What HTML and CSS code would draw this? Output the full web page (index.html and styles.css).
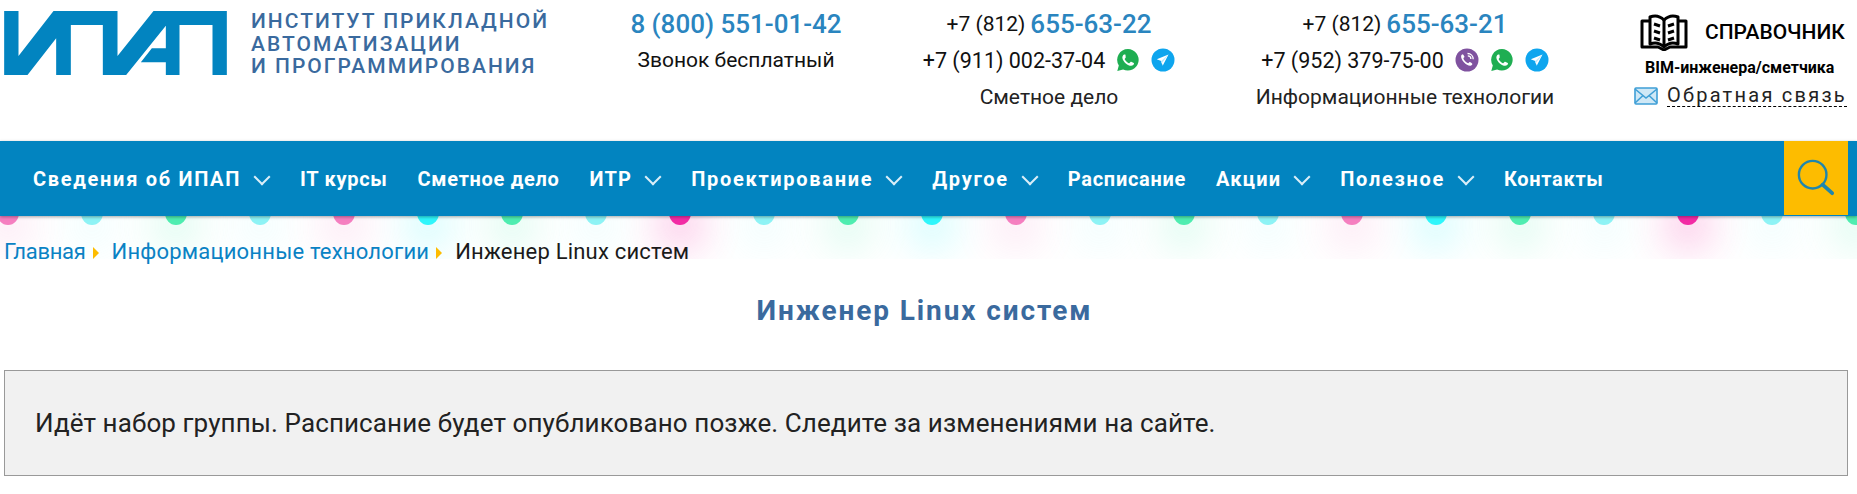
FILE: index.html

```html
<!DOCTYPE html>
<html lang="ru">
<head>
    <meta charset="UTF-8">
    <meta name="viewport" content="width=device-width, initial-scale=1.0">
    <title>Инженер Linux систем - ИПАП</title>
    <link rel="stylesheet" href="styles.css">
</head>
<body>

    <header class="top">
        <a class="brand" href="#">
            <svg class="brand-logo" viewBox="12 18 668 192">
                <polygon points="12,18 55,18 55,153 160,18 352,18 352,153 460,18 680,18 680,210 637,210 637,60 538,60 538,210 497,210 497,172 422,172 455,130 497,130 497,62 378,210 308,210 308,60 212,60 212,210 168,210 168,100 82,210 12,210"/>
            </svg>
            <span class="brand-name">Институт прикладной<br>автоматизации<br>и программирования</span>
        </a>

        <div class="contact">
            <div class="line"><a class="phone-big" href="#">8 (800) 551-01-42</a></div>
            <div class="line">Звонок бесплатный</div>
        </div>

        <div class="contact">
            <div class="line"><span>+7 (812)</span> <a class="phone-mid" href="#">655-63-22</a></div>
            <div class="line">
                <span class="phone-plain">+7 (911) 002-37-04</span>
                <svg class="msg" viewBox="0 0 24 24"><use href="#i-whatsapp"/></svg>
                <svg class="msg" viewBox="0 0 24 24"><use href="#i-telegram"/></svg>
            </div>
            <div class="line line-dept">Сметное дело</div>
        </div>

        <div class="contact">
            <div class="line"><span>+7 (812)</span> <a class="phone-mid" href="#">655-63-21</a></div>
            <div class="line">
                <span class="phone-plain">+7 (952) 379-75-00</span>
                <svg class="msg" viewBox="0 0 24 24"><use href="#i-viber"/></svg>
                <svg class="msg" viewBox="0 0 24 24"><use href="#i-whatsapp"/></svg>
                <svg class="msg" viewBox="0 0 24 24"><use href="#i-telegram"/></svg>
            </div>
            <div class="line line-dept">Информационные технологии</div>
        </div>

        <div class="side">
            <a class="guide" href="#">
                <svg class="guide-icon" viewBox="0 0 48 38">
                    <path d="M10 4 C15 2 20 3 24 7 C28 3 33 2 38 4 V31 C33 29 28 30 24 34 C20 30 15 29 10 31 Z"/>
                    <path d="M24 7 V34"/>
                    <path d="M10 8 H2 V34 H18 L24 37 L30 34 H46 V8 H38"/>
                    <path d="M14 11 L20 13 M14 18 L20 20 M14 25 L20 27 M34 11 L28 13 M34 18 L28 20 M34 25 L28 27"/>
                </svg>
                <span class="guide-title">СПРАВОЧНИК</span>
            </a>
            <div class="guide-sub">BIM-инженера/сметчика</div>
            <a class="feedback" href="#">
                <svg class="feedback-icon" viewBox="0 0 24 18">
                    <rect x="1" y="1" width="22" height="16" rx="1"/>
                    <path d="M1 2 L12 11 L23 2 M1 16 L9 8.5 M23 16 L15 8.5"/>
                </svg>
                <span class="feedback-text">Обратная связь</span>
            </a>
        </div>
    </header>

    <svg class="sprites" width="0" height="0">
        <symbol id="i-whatsapp" viewBox="0 0 24 24">
            <path fill="#1fae52" d="M12 1a10.8 10.8 0 0 0-9.2 16.4L1.3 23l5.8-1.5A10.8 10.8 0 1 0 12 1z"/>
            <path fill="#fff" d="M8.6 6.4c-.3 0-.8.1-1.2.6-.5.6-1.2 1.5-1 3 .3 2 1.6 3.8 3.4 5.4 1.8 1.500 3.600 2.300 5.400 2.300 1.300 0 2.300-.8 2.700-1.700.2-.5.1-.9-.1-1l-2.600-1.300c-.3-.1-.5-.1-.7.200l-1 1.200c-.2.2-.4.2-.7.1-1.800-.8-3.200-2.100-4.100-3.900-.1-.3 0-.5.1-.6l.8-1c.2-.3.2-.5.1-.7L9.500 6.800c-.2-.3-.5-.4-.9-.4z"/>
        </symbol>
        <symbol id="i-telegram" viewBox="0 0 24 24">
            <circle fill="#0ea5ee" cx="12" cy="12" r="11.500"/>
            <path fill="#fff" d="M17.500 6.500 5.800 11.300l4.400 1.600 1.500 4.800z"/>
            <path fill="#bfe6fb" d="M17.500 6.500 10.200 12.900l.2 2.900z"/>
        </symbol>
        <symbol id="i-viber" viewBox="0 0 24 24">
            <circle fill="#7f529f" cx="12" cy="12" r="11.500"/>
            <path fill="none" stroke="#fff" stroke-width="1.300" d="M12.500 5.500c3.300 0 5.700 2.400 5.700 5.700M12.800 7.800c1.800 0 3.100 1.300 3.100 3.100"/>
            <path fill="#fff" d="M7.800 6.200c-.6 0-1.600.9-1.700 1.900-.2 1.800 1 4.300 2.800 6.200 2 2.100 4.500 3.600 6.500 3.500 1.100 0 2-1 2-1.700 0-.4-2.100-2-2.600-2-.5-.1-1.100 1.100-1.500 1.100-.9 0-2.200-1-3.100-1.900-.9-1-1.800-2.300-1.800-3 0-.5 1.100-1 1.100-1.500 0-.5-1.600-2.600-1.700-2.600z"/>
        </symbol>
    </svg>

    <div class="nav-wrap">
        <nav class="nav">
            <a class="nav-item nav-wide has-sub" href="#">Сведения об ИПАП</a>
            <a class="nav-item nav-tight" href="#">IT курсы</a>
            <a class="nav-item nav-tight" href="#">Сметное дело</a>
            <a class="nav-item has-sub" href="#">ИТР</a>
            <a class="nav-item nav-wide has-sub" href="#">Проектирование</a>
            <a class="nav-item nav-wide has-sub" href="#">Другое</a>
            <a class="nav-item nav-tight" href="#">Расписание</a>
            <a class="nav-item has-sub" href="#">Акции</a>
            <a class="nav-item nav-wide has-sub" href="#">Полезное</a>
            <a class="nav-item nav-tight" href="#">Контакты</a>
            <button class="search" type="button">
                <svg viewBox="0 0 40 40">
                    <circle cx="16.500" cy="16.500" r="14.500"/>
                    <path class="search-handle" d="M27 27 L37 36"/>
                </svg>
            </button>
        </nav>
        <div class="garland">
            <i class="bulb pink"></i><i class="bulb pale"></i><i class="bulb green"></i><i class="bulb pale"></i>
            <i class="bulb pink"></i><i class="bulb cyan"></i><i class="bulb green"></i><i class="bulb pale"></i>
            <i class="bulb hot"></i><i class="bulb pale"></i><i class="bulb green"></i><i class="bulb cyan"></i>
            <i class="bulb pink"></i><i class="bulb pale"></i><i class="bulb green"></i><i class="bulb pale"></i>
            <i class="bulb pink"></i><i class="bulb cyan"></i><i class="bulb green"></i><i class="bulb pale"></i>
            <i class="bulb hot"></i><i class="bulb pale"></i><i class="bulb green"></i>
        </div>
    </div>

    <div class="crumbs">
        <a class="crumb-home" href="#">Главная</a>
        <span class="crumb-sep"></span>
        <a href="#">Информационные технологии</a>
        <span class="crumb-sep"></span>
        <span>Инженер Linux систем</span>
    </div>

    <h1 class="title">Инженер Linux систем</h1>

    <div class="notice">Идёт набор группы. Расписание будет опубликовано позже. Следите за изменениями на сайте.</div>

</body>
</html>
```

FILE: styles.css

```css
* {
    box-sizing: border-box;
}
body {
    margin: 0;
    background: #fff;
    color: #1a1a1a;
    font-family: Roboto, "Noto Sans", sans-serif;
    overflow: hidden;
}
a {
    color: inherit;
    text-decoration: none;
}
.sprites {
    display: block;
    height: 0;
}

/* header */
.top {
    display: grid;
    grid-template-columns: 620px 232px 394px 318px 1fr;
    height: 141px;
}
.brand {
    display: flex;
    align-items: flex-start;
    padding: 11px 0 0 4px;
}
.brand-logo {
    width: 223px;
    height: 64px;
    fill: #0284c0;
}
.brand-name {
    margin: -1px 0 0 24px;
    color: #3a6a9e;
    font-size: 21px;
    font-weight: 500;
    line-height: 22.500px;
    letter-spacing: 2px;
    text-transform: uppercase;
}
.contact {
    padding-top: 6px;
    text-align: center;
    font-size: 21px;
}
.line {
    display: flex;
    align-items: center;
    justify-content: center;
    gap: 5px;
    height: 36px;
    white-space: pre;
    color: #111;
}
.line-dept {
    height: 38px;
    color: #222;
}
.phone-big {
    color: #2a85bf;
    font-size: 26px;
    font-weight: 500;
}
.phone-mid {
    color: #2a85bf;
    font-size: 26px;
    font-weight: 500;
}
.phone-plain {
    font-size: 21.500px;
}
.msg {
    width: 24px;
    height: 24px;
    margin-left: 6px;
}
.side {
    padding: 13px 0 0 70px;
}
.guide {
    display: flex;
    align-items: center;
    gap: 17px;
    margin-left: 6px;
}
.guide-icon {
    width: 48px;
    height: 38px;
    fill: none;
    stroke: #000;
    stroke-width: 3;
    stroke-linejoin: round;
}
.guide-title {
    color: #000;
    font-size: 21px;
    font-weight: 500;
}
.guide-sub {
    margin: 7px 0 0 11px;
    color: #000;
    font-size: 16px;
    font-weight: 700;
}
.feedback {
    display: flex;
    align-items: center;
    gap: 9px;
    margin-top: 7px;
}
.feedback-icon {
    width: 24px;
    height: 18px;
    fill: #cfe8f6;
    stroke: #3f9fd6;
    stroke-width: 1.600;
}
.feedback-text {
    border-bottom: 1px dashed #000;
    color: #222;
    font-size: 20px;
    line-height: 22px;
    letter-spacing: 2.250px;
}

/* menu and the garland under it */
.nav-wrap {
    position: relative;
}
.nav {
    position: relative;
    z-index: 2;
    display: flex;
    align-items: center;
    height: 75px;
    padding-left: 33px;
    background: #0284c0;
    box-shadow: 0 1px 3px rgba(0, 0, 0, 0.35);
}
.nav-item {
    margin-right: 30px;
    color: #fff;
    font-size: 20px;
    font-weight: 700;
    letter-spacing: 1.200px;
    white-space: nowrap;
}
.nav-wide {
    letter-spacing: 1.700px;
}
.nav-tight {
    letter-spacing: 0.700px;
}
.has-sub {
    display: flex;
    align-items: center;
}
.has-sub::after {
    content: "";
    width: 10px;
    height: 10px;
    margin: -4px 2px 0 15px;
    border-right: 2px solid #dbeef8;
    border-bottom: 2px solid #dbeef8;
    transform: rotate(45deg);
}
.search {
    position: absolute;
    top: 0;
    left: 1784px;
    width: 64px;
    height: 74px;
    padding: 0;
    border: none;
    background: #fdbc00;
}
.search svg {
    display: block;
    width: 38px;
    height: 38px;
    margin: 0 auto;
    fill: none;
    stroke: #1f86ad;
    stroke-width: 2.500;
}
.search .search-handle {
    stroke-width: 4;
    stroke-linecap: round;
}
.garland {
    position: absolute;
    top: 100%;
    left: -3px;
    right: 0;
    z-index: 1;
    display: flex;
    gap: 62px;
    height: 43px;
    overflow: hidden;
    pointer-events: none;
}
.bulb {
    flex: none;
    width: 22px;
    height: 24px;
    margin-top: -15px;
    border-radius: 50%;
}
.pink {
    background: #f57fc0;
    box-shadow: 0 12px 38px 14px rgba(245, 127, 192, 0.16);
}
.hot {
    background: #f22ba4;
    box-shadow: 0 12px 38px 14px rgba(242, 43, 164, 0.24);
}
.pale {
    background: #8ef3f5;
    box-shadow: 0 12px 38px 14px rgba(142, 243, 245, 0.12);
}
.cyan {
    background: #2ff6fb;
    box-shadow: 0 12px 38px 14px rgba(47, 246, 251, 0.2);
}
.green {
    background: #4fedb0;
    box-shadow: 0 12px 38px 14px rgba(79, 237, 176, 0.18);
}

/* page body */
.crumbs {
    position: relative;
    z-index: 3;
    display: flex;
    align-items: center;
    gap: 7px;
    padding: 23px 0 0 4px;
    color: #1a1a1a;
    font-size: 22px;
    line-height: 26px;
    letter-spacing: 0.200px;
}
.crumbs a {
    color: #0a82c4;
}
.crumbs .crumb-home {
    letter-spacing: -0.300px;
}
.crumb-sep {
    width: 0;
    height: 0;
    margin: 2px 6px 0 0;
    border-left: 6px solid #fdbc00;
    border-top: 6px solid transparent;
    border-bottom: 6px solid transparent;
}
.title {
    margin: 29px 0 0;
    padding-right: 8px;
    color: #3a6a9e;
    font-size: 28px;
    font-weight: 700;
    line-height: 34px;
    letter-spacing: 1.900px;
    text-align: center;
}
.notice {
    margin: 42px 9px 0 4px;
    padding: 32px 30px 0;
    height: 106px;
    border: 1px solid #999;
    background: #f1f1f1;
    color: #222;
    font-size: 26px;
    line-height: 40px;
    letter-spacing: 0.100px;
}
```
